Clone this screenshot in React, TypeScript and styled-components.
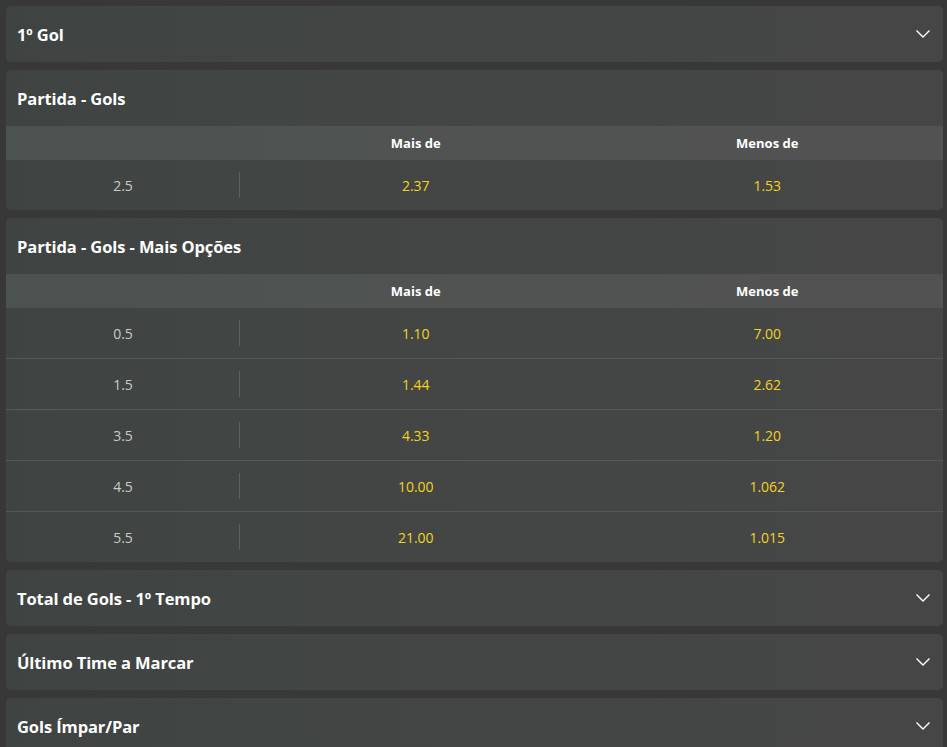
import styled, {createGlobalStyle} from "styled-components";
import {FC} from "react";

const GlobalStyle = createGlobalStyle`
  html, body {
    margin: 0;
    padding: 0;
    background: #383838;
  }
  body {
    font-family: "Open Sans", "Noto Sans", sans-serif;
    color: #fff;
  }
`;

const Page = styled.div`
  display: flex;
  flex-direction: column;
  gap: 8px;
  padding: 6px 4px 0 6px;
  height: 747px;
  box-sizing: border-box;
  overflow: hidden;
`;

const Card = styled.section`
  border-radius: 5px;
  overflow: hidden;
  background: linear-gradient(90deg, #3f4442 0%, #434645 50%, #464646 100%);
  flex-shrink: 0;
`;

const CardHeader = styled.div`
  display: flex;
  align-items: center;
  justify-content: space-between;
  height: 56px;
  padding: 0 12px 0 11px;
`;

const Title = styled.h3`
  margin: 0;
  font-size: 16.5px;
  font-weight: 700;
  letter-spacing: -0.1px;
  color: #fff;
`;

const TableHead = styled.div`
  display: grid;
  grid-template-columns: 234px 1fr 1fr;
  height: 34px;
  align-items: center;
  background: linear-gradient(90deg, #4c5250 0%, #505351 50%, #525252 100%);
`;

const HeadCell = styled.div`
  text-align: center;
  font-size: 13px;
  font-weight: 700;
  color: #fff;
`;

const Row = styled.div<{ $first?: boolean }>`
  display: grid;
  grid-template-columns: 234px 1fr 1fr;
  height: 50px;
  align-items: center;
  border-top: ${p => (p.$first ? "none" : "1px solid #545856")};
`;

const LineCell = styled.div`
  position: relative;
  height: 100%;
  display: flex;
  align-items: center;
  justify-content: center;
  font-size: 14px;
  color: #c9cbca;

  &::after {
    content: "";
    position: absolute;
    right: 0;
    top: 12px;
    bottom: 12px;
    width: 1px;
    background: #5b605e;
  }
`;

const Odd = styled.div`
  text-align: center;
  font-size: 14px;
  color: #f3d31c;
`;

const Chevron: FC = () => (
    <svg width="16" height="10" viewBox="0 0 16 10">
        <path d="M1.5 1.5 L8 8 L14.5 1.5" fill="none" stroke="#fff" strokeWidth="1.4" />
    </svg>
);

interface Market {
    line: string;
    over: string;
    under: string;
}

const CollapsedCard: FC<{ title: string }> = ({title}) => (
    <Card>
        <CardHeader>
            <Title>{title}</Title>
            <Chevron/>
        </CardHeader>
    </Card>
);

const MarketCard: FC<{ title: string; rows: Market[] }> = ({title, rows}) => (
    <Card>
        <CardHeader>
            <Title>{title}</Title>
        </CardHeader>
        <TableHead>
            <HeadCell/>
            <HeadCell>Mais de</HeadCell>
            <HeadCell>Menos de</HeadCell>
        </TableHead>
        {rows.map((r, i) => (
            <Row key={r.line} $first={i === 0}>
                <LineCell>{r.line}</LineCell>
                <Odd>{r.over}</Odd>
                <Odd>{r.under}</Odd>
            </Row>
        ))}
    </Card>
);

const mainRows: Market[] = [{line: "2.5", over: "2.37", under: "1.53"}];

const moreRows: Market[] = [
    {line: "0.5", over: "1.10", under: "7.00"},
    {line: "1.5", over: "1.44", under: "2.62"},
    {line: "3.5", over: "4.33", under: "1.20"},
    {line: "4.5", over: "10.00", under: "1.062"},
    {line: "5.5", over: "21.00", under: "1.015"},
];

const App: FC = () => (
    <>
        <GlobalStyle/>
        <Page>
            <CollapsedCard title="1º Gol"/>
            <MarketCard title="Partida - Gols" rows={mainRows}/>
            <MarketCard title="Partida - Gols - Mais Opções" rows={moreRows}/>
            <CollapsedCard title="Total de Gols - 1º Tempo"/>
            <CollapsedCard title="Último Time a Marcar"/>
            <CollapsedCard title="Gols Ímpar/Par"/>
        </Page>
    </>
);

export default App;
